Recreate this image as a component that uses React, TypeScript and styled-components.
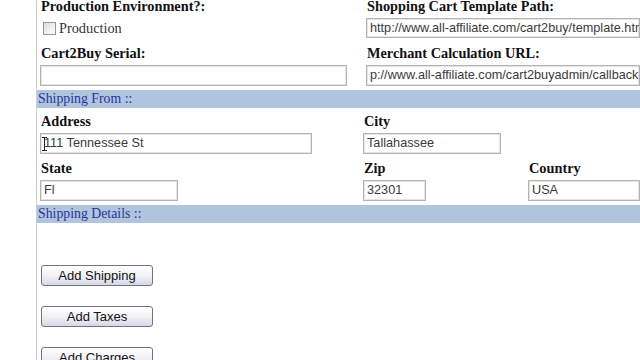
import styled, { createGlobalStyle } from 'styled-components'

const GlobalStyle = createGlobalStyle`
  html, body {
    margin: 0;
    padding: 0;
    background: #ffffff;
    overflow: hidden;
  }
  body {
    width: 640px;
    height: 360px;
  }
`

const Page = styled.div`
  width: 640px;
  height: 360px;
  overflow: hidden;
  display: flex;
`

const Gutter = styled.div`
  width: 36px;
  flex: none;
  border-right: 1px solid #cfcfcf;
  background: #ffffff;
`

const Content = styled.div`
  flex: 1;
  min-width: 0;
  margin-top: -2px;
  display: flex;
  flex-direction: column;
`

const TopGrid = styled.div`
  display: grid;
  grid-template-columns: 307px 1fr;
  column-gap: 19px;
  padding-left: 3px;
`

const Field = styled.div`
  display: flex;
  flex-direction: column;
  min-width: 0;
`

const Label = styled.div<{ $gap?: number }>`
  font-family: "Liberation Serif", "Times New Roman", serif;
  font-weight: bold;
  font-size: 14.3px;
  line-height: 16px;
  height: 16px;
  color: #111;
  padding-left: 1px;
  margin-top: ${p => p.$gap ?? 0}px;
  white-space: nowrap;
`

const TextInput = styled.div<{ $w?: number; $h?: number }>`
  position: relative;
  box-sizing: border-box;
  margin-top: 4px;
  width: ${p => (p.$w ? `${p.$w}px` : '100%')};
  height: ${p => p.$h ?? 21}px;
  border: 1px solid #b4b4b4;
  box-shadow: inset 0 0 0 1px #e4e4e4;
  background: #fff;
  font-family: "Liberation Sans", Arial, sans-serif;
  font-size: 12.7px;
  line-height: ${p => (p.$h ?? 21) - 2}px;
  color: #3a3a3a;
  padding: 0 3px;
  white-space: nowrap;
  overflow: hidden;
`

const IBeam = styled.span`
  position: absolute;
  left: 1px;
  top: 3px;
  width: 5px;
  height: 14px;
  border-top: 1px solid #222;
  border-bottom: 1px solid #222;
  box-sizing: border-box;
  &::after {
    content: '';
    position: absolute;
    left: 2px;
    top: 0;
    bottom: 0;
    width: 1px;
    background: #222;
  }
`

const CheckRow = styled.div`
  margin-top: 4px;
  height: 20px;
  display: flex;
  align-items: center;
  padding-left: 3px;
  gap: 3px;
`

const CheckBox = styled.span`
  box-sizing: border-box;
  width: 13px;
  height: 13px;
  border: 1px solid #8c97a6;
  background: linear-gradient(135deg, #dcdcdc, #ffffff);
`

const CheckText = styled.span`
  font-family: "Liberation Serif", "Times New Roman", serif;
  font-size: 14.3px;
  color: #333;
`

const Bar = styled.div<{ $gap?: number }>`
  margin-top: ${p => p.$gap ?? 4}px;
  height: 18px;
  background: #b0c4de;
  font-family: "Liberation Serif", "Times New Roman", serif;
  font-size: 13.8px;
  line-height: 18px;
  color: #27349c;
  padding-left: 1px;
  white-space: nowrap;
`

const AddressGrid = styled.div`
  display: grid;
  grid-template-columns: 323px 165px 1fr;
  padding-left: 3px;
`

const WideField = styled(Field)`
  grid-column: 1 / 2;
`

const CityField = styled(Field)`
  grid-column: 2 / 4;
`

const Buttons = styled.div`
  margin-top: 42px;
  padding-left: 4px;
  display: flex;
  flex-direction: column;
  gap: 20px;
`

const Button = styled.button`
  box-sizing: border-box;
  width: 112px;
  height: 21px;
  padding: 0;
  border: 1px solid #6f7580;
  border-radius: 3px;
  background: linear-gradient(#ffffff 0%, #f2f2f6 50%, #d5d7e6 100%);
  font-family: "Liberation Sans", Arial, sans-serif;
  font-size: 13px;
  color: #111;
  text-align: center;
`

export default function App() {
  return (
    <>
      <GlobalStyle />
      <Page>
        <Gutter />
        <Content>
          <TopGrid>
            <Field>
              <Label>Production Environment?:</Label>
              <CheckRow>
                <CheckBox />
                <CheckText>Production</CheckText>
              </CheckRow>
              <Label $gap={7}>Cart2Buy Serial:</Label>
              <TextInput />
            </Field>
            <Field>
              <Label>Shopping Cart Template Path:</Label>
              <TextInput $h={20}>http://www.all-affiliate.com/cart2buy/template.htm</TextInput>
              <Label $gap={7}>Merchant Calculation URL:</Label>
              <TextInput>p://www.all-affiliate.com/cart2buyadmin/callback1</TextInput>
            </Field>
          </TopGrid>

          <Bar>Shipping From ::</Bar>

          <AddressGrid>
            <WideField>
              <Label $gap={5}>Address</Label>
              <TextInput $w={272}>
                <IBeam />
                111 Tennessee St
              </TextInput>
            </WideField>
            <CityField>
              <Label $gap={5}>City</Label>
              <TextInput $w={138}>Tallahassee</TextInput>
            </CityField>
            <Field>
              <Label $gap={6}>State</Label>
              <TextInput $w={138}>Fl</TextInput>
            </Field>
            <Field>
              <Label $gap={6}>Zip</Label>
              <TextInput $w={63}>32301</TextInput>
            </Field>
            <Field>
              <Label $gap={6}>Country</Label>
              <TextInput>USA</TextInput>
            </Field>
          </AddressGrid>

          <Bar>Shipping Details ::</Bar>

          <Buttons>
            <Button>Add Shipping</Button>
            <Button>Add Taxes</Button>
            <Button>Add Charges</Button>
          </Buttons>
        </Content>
      </Page>
    </>
  )
}
